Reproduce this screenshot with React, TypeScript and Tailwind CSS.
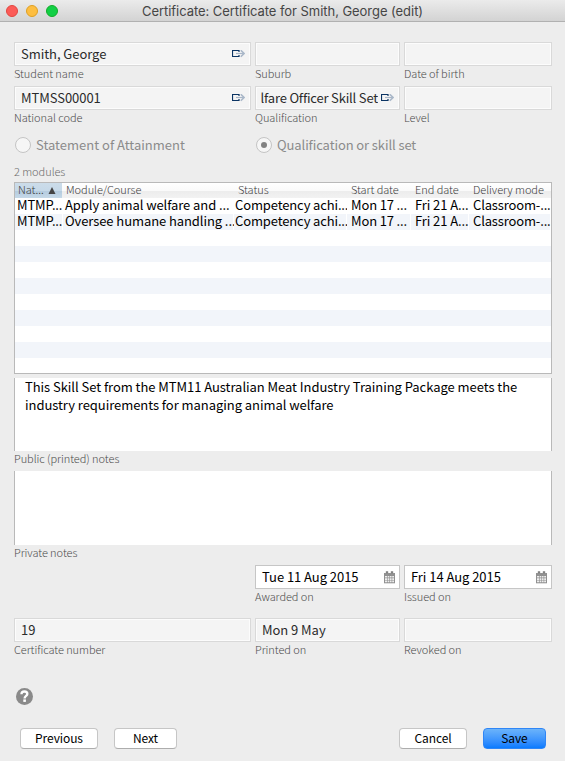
import React from "react";

function LinkIcon() {
  return (
    <svg width="13" height="8" viewBox="0 0 13 8" fill="none" className="shrink-0">
      <path d="M7 2V.5H.5V6.5H7V5" stroke="#0b3463" strokeWidth="1.2" />
      <path d="M4 3.5H12" stroke="#a9b7c8" strokeWidth="1.2" />
      <path d="M8.8 .3L12 3.5L8.8 6.7" stroke="#a9b7c8" strokeWidth="1.6" />
    </svg>
  );
}

function CalendarIcon() {
  return (
    <svg width="11" height="13" viewBox="0 0 11 13" className="shrink-0">
      <path d="M0 2H11V12.3H0Z" fill="#909090" />
      <path d="M2 .3H4V3H2ZM7 .3H9V3H7Z" fill="#777" stroke="#a5a5a5" strokeWidth=".5" />
      <path d="M1 5H3V6.6H1ZM3.6 5H5.3V6.6H3.6ZM5.9 5H7.6V6.6H5.9ZM8.2 5H10V6.6H8.2ZM1 7.3H3V8.9H1ZM3.6 7.3H5.3V8.9H3.6ZM5.9 7.3H7.6V8.9H5.9ZM8.2 7.3H10V8.9H8.2ZM1 9.6H3V11.3H1ZM3.6 9.6H5.3V11.3H3.6ZM5.9 9.6H7.6V11.3H5.9ZM8.2 9.6H10V11.3H8.2Z" fill="#eee" />
    </svg>
  );
}

const LABEL = "block h-4 whitespace-nowrap text-[11px] leading-[14px] font-light tracking-[-0.06px] text-[#4c4c4c]";

function Field({
  label,
  value = "",
  link,
  date,
  clip,
}: {
  label: string;
  value?: string;
  link?: boolean;
  date?: boolean;
  clip?: boolean;
}) {
  return (
    <div className="h-10">
      <div
        className={
          date
            ? "flex h-6 items-center border border-[#c6c6c6] bg-white pr-1 pl-1.5 text-black"
            : "flex h-6 items-center border border-[#d9d9d9] bg-[#f4f4f4] pr-[5px] pl-1.5 text-[#2b2b2b] shadow-[inset_0_0_0_1px_#fcfcfc]"
        }
      >
        <span
          className={
            clip
              ? "mr-[3px] -ml-[2px] flex min-w-0 flex-1 justify-end overflow-hidden whitespace-nowrap tracking-[-0.18px]"
              : "flex-1 whitespace-nowrap"
          }
        >
          <span>{value}</span>
        </span>
        {link && <LinkIcon />}
        {date && <CalendarIcon />}
      </div>
      <span className={LABEL}>{label}</span>
    </div>
  );
}

function Radio({ label, checked }: { label: string; checked?: boolean }) {
  return (
    <div className="flex h-4 items-center gap-[5px] pl-px text-[#8b8b8b]">
      <span className="flex size-4 items-center justify-center rounded-full border border-[#c4c4c4] bg-[#f6f6f6]">
        {checked && <span className="size-1.5 rounded-full bg-[#828282]" />}
      </span>
      <span className={checked ? "whitespace-nowrap tracking-[-0.1px]" : "whitespace-nowrap tracking-normal"}>{label}</span>
    </div>
  );
}

const COLS = "grid grid-cols-[47px_170px_112px_63px_57px_81px] gap-x-px";
const HEADERS = ["Module/Course", "Status", "Start date", "End date", "Delivery mode"];
const ROWS = [
  ["MTMP...", "Apply animal welfare and ...", "Competency achi...", "Mon 17 ...", "Fri 21 A...", "Classroom-..."],
  ["MTMP...", "Oversee humane handling ...", "Competency achi...", "Mon 17 ...", "Fri 21 A...", "Classroom-..."],
];
const CELL_STYLE = [
  "pl-0.5 tracking-[-0.15px]",
  "pl-0.5 tracking-[-0.08px]",
  "pl-px tracking-[-0.14px]",
  "pl-1 tracking-[-0.15px]",
  "pl-1 tracking-[-0.08px]",
  "pl-1 tracking-[-0.15px]",
];
const HEAD_PAD = ["pl-[3px]", "pl-1", "pl-1", "pl-1", "pl-1"];

function Modules() {
  return (
    <div className="h-48 border border-[#b9b9b9] bg-white">
      <div className={`${COLS} h-[15px] bg-[linear-gradient(#fff_0,#fafafa_50%,#ececec_51%,#f2f2f2_100%)] text-[11px] leading-[13px] font-light tracking-[-0.06px] text-[#3c3c3c]`}>
        <span className="flex h-[15px] items-center gap-1 bg-[linear-gradient(#ccdce9_0,#c6d9e8_50%,#b3cade_51%,#c5d9e8_100%)] pl-[3px]">
          <span className="h-[15px]">Nat...</span>
          <svg width="8" height="7" viewBox="0 0 8 7">
            <path d="M4 0L7.5 7H.5Z" fill="#444" />
          </svg>
        </span>
        {HEADERS.map((h, i) => (
          <span key={h} className={`${HEAD_PAD[i]} whitespace-nowrap`}>
            {h}
          </span>
        ))}
      </div>
      {Array.from({ length: 11 }, (_, r) => {
        const row = ROWS[r];
        const stripe = r % 2 ? "bg-[#f2f5fa]" : "bg-white";
        if (!row) return <div key={r} className={`${r === 10 ? "h-[15px]" : "h-4"} ${stripe}`} />;
        return (
          <div key={r} className={`${COLS} h-4 leading-[14px] text-black`}>
            {row.map((c, i) => (
              <span key={i} className={`${stripe} ${CELL_STYLE[i]} whitespace-nowrap`}>
                {c}
              </span>
            ))}
          </div>
        );
      })}
    </div>
  );
}

function Button({ label, width, primary }: { label: string; width: string; primary?: boolean }) {
  return (
    <button
      className={`${width} h-[21px] rounded-[4px] border pb-px text-[12px] leading-[18px] tracking-[-0.1px] text-black ${
        primary
          ? "border-[#2f86f6] bg-gradient-to-b from-[#6bb3fa] to-[#067bff]"
          : "border-[#c6c6c6] border-b-[#adadad] bg-white"
      }`}
    >
      <span className="block h-[18px] leading-[17px]">{label}</span>
    </button>
  );
}

const FIELDS = "grid grid-cols-[237px_145px_148px] gap-x-1";

export default function App() {
  return (
    <div className="h-[761px] w-[565px] overflow-hidden bg-[#ededed] font-['Noto_Sans_CJK_SC','Noto_Sans',sans-serif] text-[13px] leading-[18px] tracking-[-0.05px]">
      <header className="flex h-[22px] items-center border-b border-[#b1b1b1] bg-gradient-to-b from-[#ebebeb] to-[#d3d3d3] pl-1.5">
        <div className="flex w-[136px] gap-2">
          <span className="size-3 rounded-full border border-[#e2463f] bg-[#fc5b57]" />
          <span className="size-3 rounded-full border border-[#dfa023] bg-[#fdbe41]" />
          <span className="size-3 rounded-full border border-[#12ac28] bg-[#12cf45]" />
        </div>
        <span className="whitespace-nowrap font-['Inter',sans-serif] text-[13px] tracking-[-0.05px] text-[#454545]">
          Certificate: Certificate for Smith, George (edit)
        </span>
      </header>
      <main className="flex flex-col pt-5 pl-3.5">
        <div className={`${FIELDS} gap-y-1`}>
          <Field label="Student name" value="Smith, George" link />
          <Field label="Suburb" />
          <Field label="Date of birth" />
          <Field label="National code" value="MTMSS00001" link />
          <Field label="Qualification" value="lfare Officer Skill Set" link clip />
          <Field label="Level" />
        </div>
        <div className="mt-[11px] grid grid-cols-[241px_1fr]">
          <Radio label="Statement of Attainment" />
          <Radio label="Qualification or skill set" checked />
        </div>
        <span className="mt-[11px] h-[18px] text-[11px] leading-[14px] font-light text-[#6c6c6c]">2 modules</span>
        <div className="w-[538px]">
          <Modules />
          <div className="mt-1 h-[73px] w-full border-x border-[#b9b9b9] bg-white pl-2.5 text-black">
            This Skill Set from the MTM11 Australian Meat Industry Training Package meets the
            <br />
            industry requirements for managing animal welfare
          </div>
          <span className={LABEL}>Public (printed) notes</span>
          <div className="mt-1 h-[74px] border-x border-[#b9b9b9] bg-white" />
          <span className={LABEL}>Private notes</span>
        </div>
        <div className={`${FIELDS} mt-1`}>
          <div />
          <Field label="Awarded on" value="Tue 11 Aug 2015" date />
          <Field label="Issued on" value="Fri 14 Aug 2015" date />
        </div>
        <div className={`${FIELDS} mt-[13px]`}>
          <Field label="Certificate number" value="19" />
          <Field label="Printed on" value="Mon 9 May" />
          <Field label="Revoked on" />
        </div>
        <div className="mt-[30px] ml-0.5 flex size-[17px] items-center justify-center rounded-full bg-[#8a8a8a]">
          <svg width="9" height="13" viewBox="0 0 9 13" fill="none">
            <path d="M1.5 4.2C1.5 2.4 2.7 1.5 4.4 1.5S7.3 2.4 7.3 3.9C7.3 5.8 4.6 5.9 4.6 8.4" stroke="#fff" strokeWidth="2.4" />
            <rect x="3.3" y="9.4" width="2.6" height="2.5" fill="#fff" />
          </svg>
        </div>
        <div className="mt-[23px] ml-1.5 flex w-[526px]">
          <Button label="Previous" width="w-[78px]" />
          <div className="w-4" />
          <Button label="Next" width="w-[63px]" />
          <div className="flex-1" />
          <Button label="Cancel" width="w-[68px]" />
          <div className="w-4" />
          <Button label="Save" width="w-[63px]" primary />
        </div>
      </main>
    </div>
  );
}
